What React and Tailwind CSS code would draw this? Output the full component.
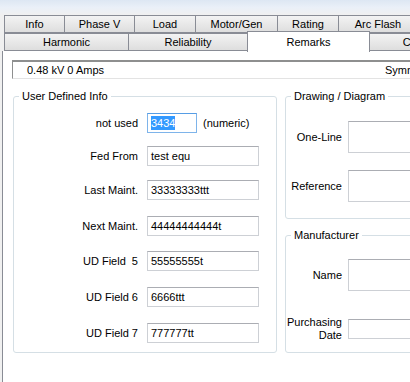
const row1 = [
  { label: "Info", w: "w-[61px]" },
  { label: "Phase V", w: "w-[71px]" },
  { label: "Load", w: "w-[62px]" },
  { label: "Motor/Gen", w: "w-[83px]" },
  { label: "Rating", w: "w-[62px]" },
  { label: "Arc Flash", w: "w-[80px]" },
];

const row2 = [
  { label: "Harmonic", w: "w-[125px]" },
  { label: "Reliability", w: "w-[120px]" },
  { label: "Remarks", w: "w-[123px]", active: true },
  { label: "Coordination", w: "w-[130px]" },
];

const fields = [
  { label: "Fed From", value: "test equ", mt: "mt-[13px]" },
  { label: "Last Maint.", value: "33333333ttt", mt: "mt-[14px]" },
  { label: "Next Maint.", value: "44444444444t", mt: "mt-[16px]" },
  { label: "UD Field  5", value: "55555555t", mt: "mt-[15px]" },
  { label: "UD Field 6", value: "6666ttt", mt: "mt-[16px]" },
  { label: "UD Field 7", value: "777777tt", mt: "mt-[16px]" },
];

function Tab({ label, w, active, first }) {
  if (active) {
    return (
      <div
        className={`${w} -ml-px -mt-[2px] h-[21px] relative z-10 bg-white border border-b-0 border-[#898c95] flex items-center justify-center shrink-0`}
      >
        {label}
      </div>
    );
  }
  return (
    <div
      className={`${w} ${first ? "" : "-ml-px"} h-full border border-[#898c95] bg-gradient-to-b from-[#f3f3f3] to-[#dedede] flex items-center justify-center shrink-0 whitespace-nowrap overflow-hidden`}
    >
      {label}
    </div>
  );
}

function TextBox({ children, className = "" }) {
  return (
    <div
      className={`border border-[#cdd0d5] border-t-[#abadb3] bg-white flex items-center pl-[3px] ${className}`}
    >
      {children}
    </div>
  );
}

export default function App() {
  return (
    <div className="w-[410px] h-[382px] overflow-hidden bg-[#f0f0f0] flex flex-col font-['Liberation_Sans',Arial,sans-serif] text-[11px] leading-[13px] text-black">
      <div className="h-[15px] shrink-0 bg-gradient-to-b from-[#dde7f3] via-[#eaf0f8] to-[#f0f0f0]" />

      {/* tab rows */}
      <div className="flex h-[18px] pl-[4px] shrink-0">
        {row1.map((t, i) => (
          <Tab key={t.label} {...t} first={i === 0} />
        ))}
      </div>
      <div className="flex items-start h-[18px] pl-[4px] shrink-0">
        {row2.map((t, i) => (
          <Tab key={t.label} {...t} first={i === 0} />
        ))}
      </div>

      {/* page */}
      <div className="flex-1 bg-white ml-[2px] border-l border-[#898c95] pl-[9px] pt-[9px]">
        <div className="w-[520px] h-[19px] flex items-center border-t-2 border-l border-[#8e8f8f] border-r border-b border-r-[#e3e3e3] border-b-[#e3e3e3] pl-[14px]">
          <span className="w-[358px] shrink-0">0.48 kV 0 Amps</span>
          <span>Symmetrical</span>
        </div>

        <div className="flex items-start gap-[8px] mt-[11px] pl-px">
          {/* User Defined Info */}
          <fieldset className="w-[264px] h-[263px] shrink-0 border border-[#d5dfe5] rounded-[3px]">
            <legend className="ml-[5px] px-[3px] leading-[13px]">User Defined Info</legend>
            <div className="flex items-center h-[20px] mt-[10px]">
              <span className="w-[124px] text-right shrink-0">not used</span>
              <div className="ml-[9px] w-[50px] h-[20px] border border-[#7eb4ea] border-t-[#569de5] flex items-center pl-[3px]">
                <span className="bg-[#3399ff] text-white leading-[14px]">3434</span>
              </div>
              <span className="ml-[6px]">(numeric)</span>
            </div>
            {fields.map((f) => (
              <div key={f.label} className={`flex items-center h-[20px] ${f.mt}`}>
                <span className="w-[124px] text-right shrink-0 whitespace-pre">{f.label}</span>
                <TextBox className="ml-[9px] w-[112px] h-[20px]">{f.value}</TextBox>
              </div>
            ))}
          </fieldset>

          {/* right column */}
          <div className="flex flex-col shrink-0 w-[200px]">
            <fieldset className="h-[129px] border border-[#d5dfe5] rounded-[3px]">
              <legend className="ml-[5px] px-[3px] leading-[13px]">Drawing / Diagram</legend>
              <div className="flex items-center mt-[18px]">
                <span className="w-[56px] text-right shrink-0">One-Line</span>
                <TextBox className="ml-[6px] w-[120px] h-[32px]" />
              </div>
              <div className="flex items-center mt-[17px]">
                <span className="w-[56px] text-right shrink-0">Reference</span>
                <TextBox className="ml-[6px] w-[120px] h-[32px]" />
              </div>
            </fieldset>

            <fieldset className="mt-[10px] h-[124px] border border-[#d5dfe5] rounded-[3px]">
              <legend className="ml-[5px] px-[3px] leading-[13px]">Manufacturer</legend>
              <div className="flex items-center mt-[17px]">
                <span className="w-[56px] text-right shrink-0">Name</span>
                <TextBox className="ml-[6px] w-[120px] h-[32px]" />
              </div>
              <div className="flex items-center mt-[25px]">
                <span className="w-[56px] text-right shrink-0 leading-[13px]">
                  Purchasing
                  <br />
                  Date
                </span>
                <TextBox className="ml-[6px] w-[120px] h-[20px]" />
              </div>
            </fieldset>
          </div>
        </div>
      </div>
    </div>
  );
}
